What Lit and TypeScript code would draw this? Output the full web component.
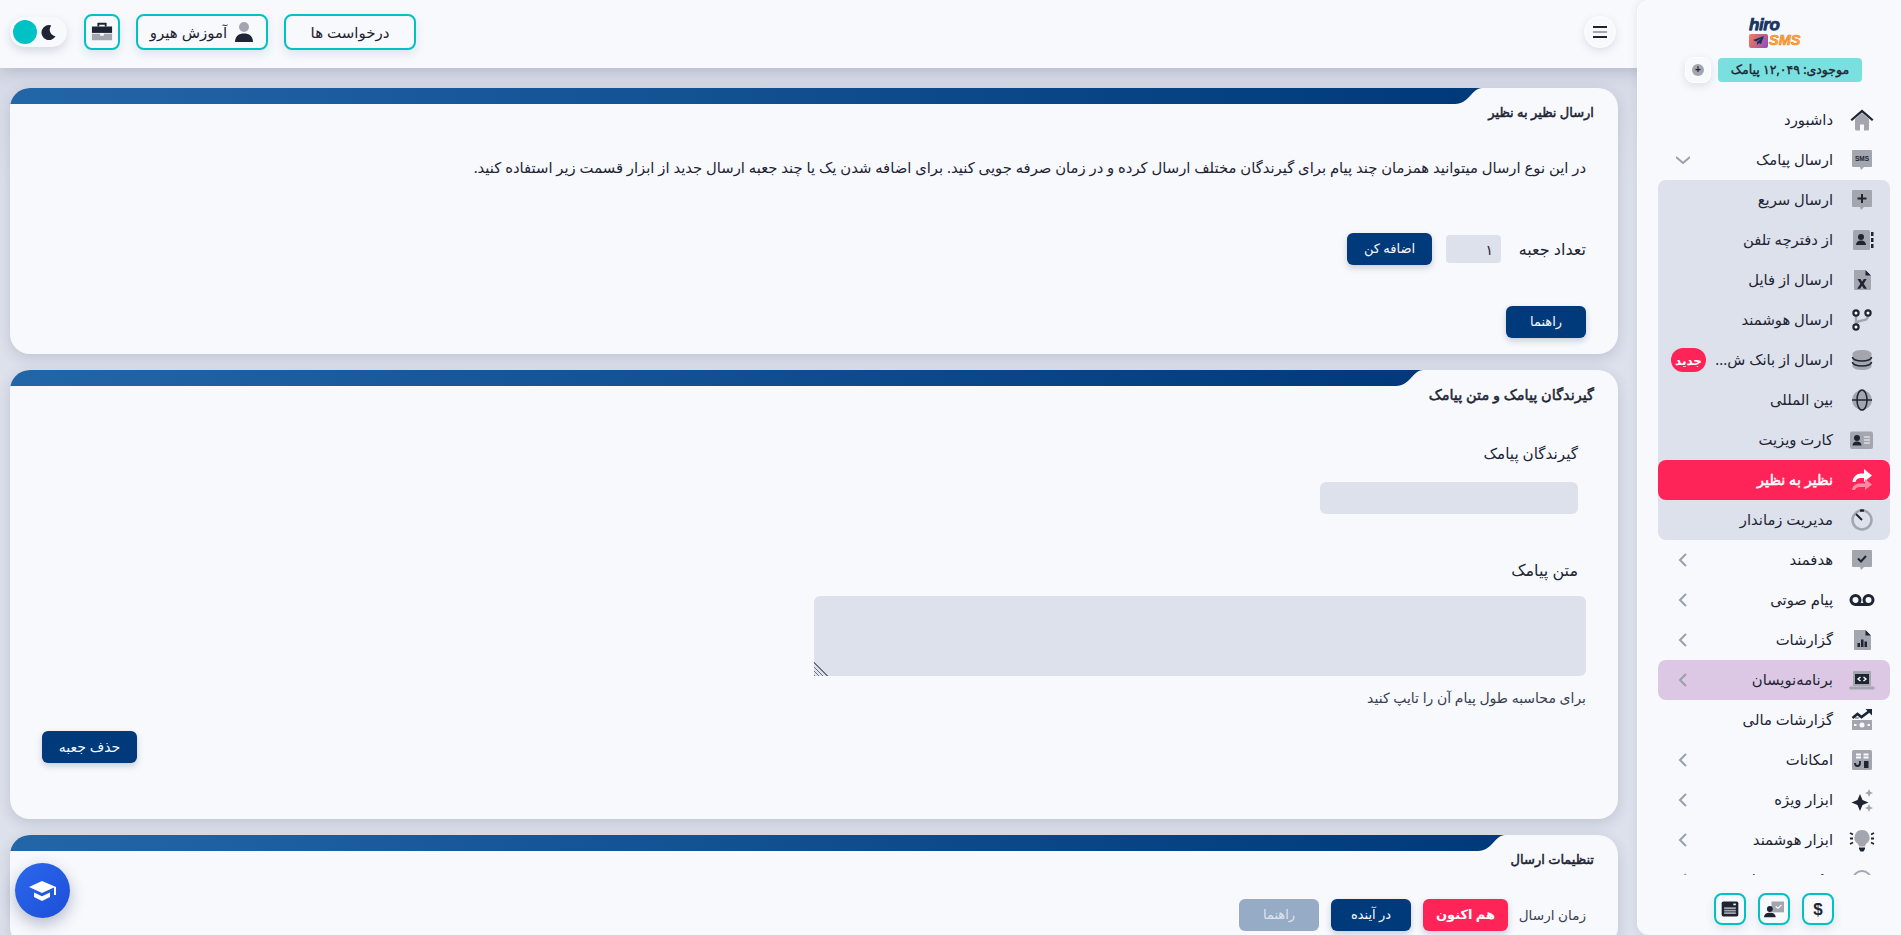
import { LitElement, html, css, svg } from "lit";
import { customElement } from "lit/decorators.js";

const D = "#1e2433";
const G = "#a3a6ae";
const ic = (c: unknown, cls = "ic") => html`<svg class=${cls} viewBox="0 0 24 24">${c}</svg>`;
const bubble = svg`<path fill=${G} d="M3 2h18a1 1 0 0 1 1 1v15a1 1 0 0 1-1 1h-7l-3 3-1-3H3a1 1 0 0 1-1-1V3a1 1 0 0 1 1-1z"/>`;

const icons: Record<string, unknown> = {
  home: ic(svg`<path fill=${G} d="M5 11l7-6 7 6v10a1.5 1.5 0 0 1-1.5 1.5H14v-6h-4v6H6.500A1.500 1.500 0 0 1 5 21z"/><path fill=${D} d="M12 1.500 23.500 11.500 22 13 12 4.500 2 13 .5 11.500z"/>`),
  sms: ic(svg`${bubble}<text x="12" y="13.200" text-anchor="middle" font-size="6.500" font-weight="700" font-family="Liberation Sans" fill=${D}>SMS</text>`),
  quick: ic(svg`${bubble}<path fill=${D} d="M11 6h2v3.500h3.500v2H13V15h-2v-3.500H7.500v-2H11z"/>`),
  book: ic(svg`<rect x="3" y="2" width="17" height="20" rx="1.500" fill=${G}/><circle cx="11" cy="9" r="3" fill=${D}/><path fill=${D} d="M6 17c0-3 2-4.500 5-4.500s5 1.500 5 4.500z"/><rect x="21" y="4" width="2.500" height="4" fill=${D}/><rect x="21" y="10" width="2.500" height="4" fill=${D}/><rect x="21" y="16" width="2.500" height="4" fill=${D}/>`),
  file: ic(svg`<path fill=${G} d="M4 2h11l6 6v13a1 1 0 0 1-1 1H5a1 1 0 0 1-1-1z"/><path fill=${D} d="M15.500 2 21 7.500h-5.500zM7.500 11h3l1.600 2.800L13.800 11h2.900l-3 4.800 3.200 5h-3l-1.900-3.100-1.900 3.100H7.200l3.200-5z"/>`),
  smart: ic(svg`<path fill="none" stroke=${G} stroke-width="2.500" d="M6 7v10M18 7c0 5-3 5-6 5.500-3 .5-6 1-6 4.500"/><circle cx="6" cy="5" r="2.600" fill="#fff" stroke=${D} stroke-width="2.200"/><circle cx="18" cy="5" r="2.600" fill="#fff" stroke=${D} stroke-width="2.200"/><circle cx="6" cy="19" r="2.600" fill="#fff" stroke=${D} stroke-width="2.200"/>`),
  db: ic(svg`<path fill=${G} d="M2.500 6C2.500 3.500 7 2 12 2s9.500 1.500 9.500 4v12c0 2.500-4.500 4-9.500 4s-9.500-1.500-9.500-4z"/><path fill="none" stroke=${D} stroke-width="1.500" d="M2.500 9c0 2.500 4.500 4 9.500 4s9.500-1.500 9.500-4M2.500 14c0 2.500 4.500 4 9.500 4s9.500-1.500 9.500-4"/>`),
  globe: ic(svg`<circle cx="12" cy="12" r="10" fill=${G}/><g fill="none" stroke=${D} stroke-width="1.500"><ellipse cx="12" cy="12" rx="5" ry="10"/><path d="M2 12h20"/></g>`),
  card: ic(svg`<rect x="0" y="3.500" width="23" height="17.500" rx="2" fill=${G}/><circle cx="7" cy="10" r="3" fill=${D}/><path fill=${D} d="M2.500 17.500c0-3 2-4 4.500-4s4.500 1 4.500 4z"/><path stroke="#f7f9fd" stroke-width="1.200" d="M14 9h6M14 12h6M14 15h6"/>`),
  share: ic(svg`<path fill="#ffffff" d="M14 1l8 6.500L14 14V10h-3c-3 0-5 1.500-5.500 4H2.500C3 8.500 7 5.500 11 5.500h3z" /><path fill="#ff8aa5" d="M15 11l7 5.500-7 5.500v-3h-5c-3 0-4.500 1-5 3H2c.5-4 3.500-6.500 8-6.500h5z"/>`),
  timer: ic(svg`<circle cx="12" cy="12" r="9.500" fill="none" stroke=${G} stroke-width="2.500"/><path fill="none" stroke=${D} stroke-width="2" d="M6 6l6 6"/><path fill="none" stroke=${D} stroke-width="2.500" d="M10 2.600a9.500 9.500 0 0 1 4 0"/>`),
  target: ic(svg`${bubble}<path fill="none" stroke=${D} stroke-width="2" d="M8 10.500l3 3 5-5.500"/>`),
  voice: ic(svg`<g fill="none" stroke=${D} stroke-width="3"><circle cx="5.500" cy="12" r="4.500"/><circle cx="18.500" cy="12" r="4.500"/><path d="M5.500 16.500h13"/></g>`),
  report: ic(svg`<path fill=${G} d="M4 2h11l6 6v13a1 1 0 0 1-1 1H5a1 1 0 0 1-1-1z"/><path fill=${D} d="M15.500 2 21 7.500h-5.500zM7.500 15h2.500v4H7.500zM11 11.500h2.500V19H11zM14.500 13.500H17V19h-2.500z"/>`),
  dev: ic(svg`<rect x="3" y="3" width="18" height="15" rx="1" fill=${G}/><rect x="5" y="6" width="14" height="10" fill=${D}/><path fill="none" stroke="#fff" stroke-width="1.400" d="M10.500 9l-2.500 2 2.500 2M13.500 9l2.500 2-2.500 2"/><rect x="-.5" y="18.500" width="25" height="3" rx="1" fill=${G}/>`),
  money: ic(svg`<rect x="2" y="12" width="20" height="10" fill=${G}/><path fill=${G} d="M5 9h5l-2 2H5z"/><circle cx="12" cy="17" r="2.500" fill="#f7f9fd"/><rect x="4" y="16" width="2.500" height="2" fill="#f7f9fd"/><rect x="17.500" y="16" width="2.500" height="2" fill="#f7f9fd"/><path fill="none" stroke=${D} stroke-width="2.600" d="M2.500 10l5-4 4 3 8-6"/><path fill=${D} d="M15.500 1H22v6.500z"/>`),
  feat: ic(svg`<rect x="2" y="2" width="20" height="20" rx="1.500" fill=${G}/><path stroke="#f7f9fd" stroke-width="1.800" d="M6 6.500h5M13.500 6.500h5M6 9.500h5M13.500 9.500h5"/><path fill="none" stroke=${D} stroke-width="1.800" d="M5 15c0 4 5 4 5 0v-2"/><rect x="14" y="13" width="4.500" height="7" fill=${D}/>`),
  spark: ic(svg`<path fill=${D} d="M10 6l2.500 6 6 2.500-6 2.500-2.500 6-2.500-6-6-2.500 6-2.500z"/><path fill=${G} d="M19 1l1.200 2.800L23 5l-2.800 1.200L19 9l-1.200-2.800L15 5l2.800-1.200zM19 16l1.200 2.800L23 20l-2.800 1.200L19 24l-1.200-2.800L15 20l2.800-1.200z"/>`),
  bulb: ic(svg`<path fill=${G} d="M12 2a7.500 7.500 0 0 0-4.500 13.500c1 1 1.500 2 1.500 3h6c0-1 .5-2 1.500-3A7.500 7.500 0 0 0 12 2z"/><path fill=${D} d="M9 19.500h6v1.500l-1.500 2.500h-3L9 21z"/><path stroke=${D} stroke-width="1.800" d="M0 5l3 1.500M0 10.500h3M0 16l3-1.500M24 5l-3 1.500M24 10.500h-3M24 16l-3-1.500"/>`),
  support: ic(svg`<circle cx="12" cy="12" r="9" fill="none" stroke=${G} stroke-width="2"/><circle cx="12" cy="12" r="5" fill=${D}/>`),
};

const top = [
  { t: "داشبورد", i: "home" },
  { t: "ارسال پیامک", i: "sms", c: "down" },
];
const sub = [
  { t: "ارسال سریع", i: "quick" },
  { t: "از دفترچه تلفن", i: "book" },
  { t: "ارسال از فایل", i: "file" },
  { t: "ارسال هوشمند", i: "smart" },
  { t: "ارسال از بانک ش...", i: "db", badge: true },
  { t: "بین المللی", i: "globe" },
  { t: "کارت ویزیت", i: "card" },
  { t: "نظیر به نظیر", i: "share", active: true },
  { t: "مدیریت زماندار", i: "timer" },
];
const rest = [
  { t: "هدفمند", i: "target", c: "left" },
  { t: "پیام صوتی", i: "voice", c: "left" },
  { t: "گزارشات", i: "report", c: "left" },
  { t: "برنامه‌نویسان", i: "dev", c: "left", dev: true },
  { t: "گزارشات مالی", i: "money" },
  { t: "امکانات", i: "feat", c: "left" },
  { t: "ابزار ویژه", i: "spark", c: "left" },
  { t: "ابزار هوشمند", i: "bulb", c: "left" },
  { t: "تیکت و پشتیبانی", i: "support", c: "left" },
];

@customElement("app-root")
export class AppRoot extends LitElement {
  static styles = css`
    :host { display: block; height: 935px; overflow: hidden; font-family: "Noto Sans", "DejaVu Sans", sans-serif; color: #1e2433; }
    * { box-sizing: border-box; }
    .root { display: flex; height: 935px; overflow: hidden; background: #dde1ec; }

    .side { flex: none; width: 264px; height: 935px; background: #f7f9fd; border-top-left-radius: 12px; border-bottom-left-radius: 12px;
      position: relative; z-index: 3; display: flex; flex-direction: column; box-shadow: 0 0 8px rgba(60,70,100,.12); border-left: 1px solid #fff; }
    .logo { align-self: flex-start; margin: 17px 100px 0 0; height: 31px; width: 52px; display: flex; flex-direction: column; direction: ltr; }
    .hiro { font: italic 900 17px/16px "Liberation Sans", sans-serif; color: #1b3560; -webkit-text-stroke: .7px #1b3560; text-shadow: 0 1px 0 #5a7fb0; letter-spacing: -.4px; }
    .logo-row { display: flex; align-items: center; gap: 1px; height: 15px; }
    .plane { width: 19px; height: 14px; border-radius: 2px; background: linear-gradient(120deg, #ff7a52, #8a4cc4); display: flex; align-items: center; justify-content: center; flex: none; }
    .plane svg { width: 11px; height: 9px; }
    .smsl { font: italic 900 14.500px/15px "Liberation Sans", sans-serif; color: #fdb02c; -webkit-text-stroke: .6px #f4792a; }
    .bal { display: flex; align-items: center; gap: 7px; margin: 8px 39px 0 0; height: 27px; }
    .pill { width: 144px; height: 24px; border-radius: 4px; background: #7adfdf; font-size: 12.500px; -webkit-text-stroke: .35px #1e2433; display: flex; align-items: center; justify-content: center; white-space: nowrap; }
    .plus { width: 26px; height: 26px; border-radius: 8px; background: #f7f9fd; border: 1px solid #fff; box-shadow: 0 3px 8px rgba(60,70,100,.14); display: flex; align-items: center; justify-content: center; }
    .plus i { width: 12px; height: 12px; border-radius: 50%; background: #a3a6ae; color: #1e2433; font: 700 10px/12px "Liberation Sans", sans-serif; text-align: center; }
    .menu { flex: 1; min-height: 0; overflow: hidden; margin-top: 17px; }
    .row { display: flex; align-items: center; height: 40px; margin: 0 11px 0 20px; padding: 0 16px 0 18px; border-radius: 8px; font-size: 14.800px; white-space: nowrap; }
    .row .ic { width: 24px; height: 24px; flex: none; overflow: visible; }
    .row span.lb { margin-right: 17px; line-height: 36px; height: 38px; }
    .panel { background: #dde1ec; border-radius: 8px; margin: 0 11px 0 20px; }
    .panel .row { margin: 0; }
    .row.active { background: #ff2457; color: #fff; -webkit-text-stroke: .5px #fff; font-size: 14.500px; }
    .row.dev { background: #dcc8e4; }
    .badge { margin-right: auto; margin-left: -5px; width: 35px; height: 24px; border-radius: 12px; background: #ff2457; color: #fff; font-size: 12px; font-weight: 700; display: flex; align-items: center; justify-content: center; }
    .chev { margin-right: auto; width: 14px; height: 14px; flex: none; fill: none; stroke: #9aa0ab; stroke-width: 2; }
    .side-foot { flex: none; height: 60px; padding: 18px 67px 0 0; display: flex; gap: 12px; }
    .sq { width: 32px; height: 32px; flex: none; border: 2px solid #00c2c4; border-radius: 8px; background: #f7f9fd; box-shadow: 0 4px 10px rgba(60,70,100,.12); display: flex; align-items: center; justify-content: center; }
    .sq svg { width: 20px; height: 20px; }
    .dollar { font: 700 17px/1 "Liberation Sans", sans-serif; }

    .main { flex: 1; min-width: 0; margin-right: -12px; display: flex; flex-direction: column; overflow: hidden; }
    .head { flex: none; height: 68px; background: #f7f9fd; padding: 0 33px 4px 10px; display: flex; align-items: center; gap: 16px; position: relative; z-index: 2; box-shadow: 0 2px 16px rgba(40,50,80,.22); }
    .burger { width: 32px; height: 32px; border-radius: 50%; background: #f7f9fd; border: 1px solid #fff; box-shadow: 0 3px 8px rgba(60,70,100,.14); display: flex; flex-direction: column; gap: 3px; align-items: center; justify-content: center; margin-left: auto; }
    .burger i { width: 14px; height: 2px; background: #1e2433; }
    .burger i:nth-child(2) { background: #a3a6ae; }
    .hbtn { width: 132px; height: 36px; border: 2px solid #00c2c4; border-radius: 8px; background: #f7f9fd; box-shadow: 0 4px 10px rgba(60,70,100,.12); font-size: 15px; display: flex; align-items: center; justify-content: center; gap: 7px; white-space: nowrap; }
    .hbtn svg { width: 20px; height: 22px; }
    .brief { width: 36px; }
    .brief svg { width: 22px; height: 22px; }
    .toggle { width: 57px; height: 30px; border-radius: 15px; background: #f7f9fd; box-shadow: 0 4px 10px rgba(60,70,100,.18); display: flex; align-items: center; justify-content: space-between; padding: 0 3px; margin-right: 1px; }
    .toggle svg { width: 15px; height: 15px; margin-right: 8px; }
    .toggle b { width: 24px; height: 24px; border-radius: 50%; background: #00c2c4; }

    .content { flex: 1; min-height: 0; overflow: hidden; padding: 20px 31px 0 10px; display: flex; flex-direction: column; gap: 16px; background: linear-gradient(#d6dae6, #dde1ec 120px); }
    .card { flex: none; background: #f7f9fd; border-radius: 20px; overflow: hidden; box-shadow: 0 4px 14px rgba(40,50,80,.16); display: flex; flex-direction: column; }
    .chead { display: flex; height: 40px; padding-right: 24px; }
    .ttl { font-size: 13px; -webkit-text-stroke: .5px #1e2433; line-height: 20px; padding-top: 14px; white-space: nowrap; }
    .ttl.big { font-size: 14.500px; }
    .strip { flex: 1; height: 16px; margin-right: 6px; display: flex; flex-direction: row-reverse; }
    .strip i { flex: 1; background: linear-gradient(to right, #2366a8, #003a7a); }
    .strip svg { width: 27px; height: 16px; flex: none; display: block; }
    .cbody { padding: 0 32px 16px; display: flex; flex-direction: column; }
    .cbody.tall { padding-bottom: 56px; }
    .para { margin: 27px 0 0; font-size: 14.800px; line-height: 24px; white-space: nowrap; }
    .line { display: flex; align-items: center; }
    .count-line { margin-top: 54px; }
    .time-line { margin-top: 24px; gap: 12px; }
    .btn { height: 32px; width: 80px; flex: none; border: 0; border-radius: 6px; background: #003a7a; color: #f7f9fd; font: inherit; font-size: 13px; padding-bottom: 2px; display: flex; align-items: center; justify-content: center; box-shadow: 0 3px 6px rgba(40,50,80,.22); white-space: nowrap; }
    .help { margin-top: 41px; }
    .w85 { width: 85px; }
    .del { width: 95px; align-self: flex-end; margin-top: 23px; font-size: 14px; }
    .pink { background: #ff2457; color: #fff; font-weight: 700; }
    .dis { background: #96abc6; color: #dfe5ee; box-shadow: none; }
    .lbl { white-space: nowrap; line-height: 24px; padding-bottom: 1px; }
    .l-count { width: 85px; font-size: 16px; }
    .l-time { width: 66px; font-size: 13.600px; color: #3a4050; }
    .l-rcp { margin: 31px 8px 0 0; height: 24px; font-size: 15.200px; }
    .l-msg { margin: 44px 8px 0 0; height: 24px; font-size: 16px; }
    input, textarea { background: #dde1ec; border: 0; border-radius: 4px; font: inherit; font-size: 14px; color: #1e2433; outline: none; display: block; padding: 0 8px; }
    .num { width: 55px; height: 28px; margin: 0 0 0 14px; }
    .rcp { width: 258px; height: 32px; border-radius: 6px; margin: 17px 8px 0 0; }
    .msg { width: 772px; height: 80px; border-radius: 6px; margin: 14px 0 0 0; }
    .msg::-webkit-resizer {
      background:
        linear-gradient(to bottom left, #dde1ec 50%, transparent 50%),
        repeating-linear-gradient(45deg, #6d7280 0 1px, #dde1ec 1px 3px);
    }
    .hint { font-size: 14px; line-height: 20px; margin: 12px 0 0 0; color: #3a4050; }
    .fab { position: absolute; left: 15px; top: 863px; z-index: 4; width: 55px; height: 55px; border-radius: 50%; background: linear-gradient(135deg, #2b68ec, #1d4ed8); box-shadow: 0 6px 16px rgba(30,40,80,.3); display: flex; align-items: center; justify-content: center; }
    .fab svg { width: 28px; height: 28px; }
  `;

  private chev(c?: string) {
    if (!c) return null;
    return html`<svg class="chev" viewBox="0 0 14 14">${c === "down" ? svg`<path d="M0 4l7 6 7-6"/>` : svg`<path d="M10 1l-6 6 6 6"/>`}</svg>`;
  }

  private row(r: any) {
    return html`<div class="row ${r.active ? "active" : ""} ${r.dev ? "dev" : ""}">
      ${icons[r.i]}<span class="lb">${r.t}</span>
      ${r.badge ? html`<span class="badge">جدید</span>` : null}${this.chev(r.c)}
    </div>`;
  }

  private cardHead(t: string, big = false) {
    return html`<div class="chead"><div class="ttl ${big ? "big" : ""}">${t}</div>
      <div class="strip"><i></i><svg viewBox="0 0 27 16"><path fill="#003a7a" d="M0 0h27C17 0 14 16 0 16z"/></svg></div></div>`;
  }

  render() {
    return html`<div class="root" dir="rtl">
      <aside class="side">
        <div class="logo">
          <div class="hiro">hiro</div>
          <div class="logo-row"><div class="plane"><svg viewBox="0 0 11 9"><path fill="#17305c" d="M11 0 0 4l3 1.500L9 2 4 6v3l2-2 2 1z"/></svg></div><div class="smsl">SMS</div></div>
        </div>
        <div class="bal"><div class="pill">موجودی: ۱۲,۰۴۹ پیامک</div><div class="plus"><i>+</i></div></div>
        <nav class="menu">
          ${top.map((r) => this.row(r))}
          <div class="panel">${sub.map((r) => this.row(r))}</div>
          ${rest.map((r) => this.row(r))}
        </nav>
        <div class="side-foot">
          <div class="sq"><span class="dollar">$</span></div>
          <div class="sq"><svg viewBox="0 0 24 24"><rect x="9" y="3" width="15" height="13" fill=${G}/><path fill="none" stroke="#f7f9fd" stroke-width="1.500" d="M14 9l3 2 4-4"/><circle cx="7" cy="12" r="3.500" fill=${D}/><path fill=${D} d="M0 22c0-4 3-5.500 7-5.500s7 1.500 7 5.500z"/></svg></div>
          <div class="sq"><svg viewBox="0 0 24 24"><rect x="2" y="3" width="20" height="18" rx="2" fill=${D}/><path stroke="#a3a6ae" stroke-width="2" d="M5 11h14M5 14h14M5 17h14"/><rect x="16" y="5.500" width="3" height="2" fill="#f7f9fd"/></svg></div>
        </div>
      </aside>
      <div class="main">
        <header class="head">
          <div class="burger"><i></i><i></i><i></i></div>
          <div class="hbtn">درخواست ها</div>
          <div class="hbtn"><svg viewBox="0 0 20 22"><circle cx="10" cy="6" r="5" fill=${G}/><path fill=${D} d="M1 21c0-6 4-8.500 9-8.500s9 2.500 9 8.500z"/></svg><span>آموزش هیرو</span></div>
          <div class="hbtn brief"><svg viewBox="0 0 24 24"><path fill="none" stroke=${D} stroke-width="2" d="M8 6V3h8v3"/><path fill=${D} d="M1 6h22v7H1z"/><path fill=${G} d="M1 14h9v2h4v-2h9v7H1z"/></svg></div>
          <div class="toggle"><svg viewBox="0 0 16 16"><path fill=${D} d="M11 .5A8 8 0 1 0 15.500 12 7 7 0 0 1 11 .5z"/></svg><b></b></div>
        </header>
        <div class="content">
          <section class="card">
            ${this.cardHead("ارسال نظیر به نظیر")}
            <div class="cbody">
              <p class="para">در این نوع ارسال میتوانید همزمان چند پیام برای گیرندگان مختلف ارسال کرده و در زمان صرفه جویی کنید. برای اضافه شدن یک یا چند جعبه ارسال جدید از ابزار قسمت زیر استفاده کنید.</p>
              <div class="line count-line">
                <span class="lbl l-count">تعداد جعبه</span>
                <input class="num" readonly .value=${"۱"} />
                <div class="btn w85">اضافه کن</div>
              </div>
              <div class="btn help">راهنما</div>
            </div>
          </section>
          <section class="card">
            ${this.cardHead("گیرندگان پیامک و متن پیامک", true)}
            <div class="cbody tall">
              <div class="lbl l-rcp">گیرندگان پیامک</div>
              <input class="rcp" />
              <div class="lbl l-msg">متن پیامک</div>
              <textarea class="msg"></textarea>
              <div class="hint">برای محاسبه طول پیام آن را تایپ کنید</div>
              <div class="btn del">حذف جعبه</div>
            </div>
          </section>
          <section class="card">
            ${this.cardHead("تنظیمات ارسال")}
            <div class="cbody">
              <div class="line time-line">
                <span class="lbl l-time">زمان ارسال</span>
                <div class="btn w85 pink">هم اکنون</div>
                <div class="btn">در آینده</div>
                <div class="btn dis">راهنما</div>
              </div>
            </div>
          </section>
        </div>
      </div>
      <div class="fab"><svg viewBox="0 0 28 28"><path fill="#fff" d="M13 4 0 10l13 6 12-5.500V18h2V10z"/><path fill="#fff" d="M5 15.500V20l8 4 8-4v-4.500l-8 3.700z"/></svg></div>
    </div>`;
  }
}
